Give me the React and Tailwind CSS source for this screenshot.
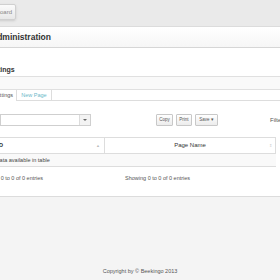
export default function App() {
  const f = { fontFamily: '"Liberation Sans", Arial, sans-serif' };
  return (
    <div className="w-[280px] h-[280px] overflow-hidden bg-[#f4f4f4] text-[#333]" style={f}>
      <div className="h-[27px] bg-[#eaeaea] flex items-start pt-[4px] border-b border-[#dcdcdc]">
        <div className="ml-[-30px] shrink-0 w-[46px] h-[16px] flex items-center justify-end pr-[3px] text-[6px] text-[#888] bg-gradient-to-b from-[#fbfbfb] to-[#e8e8e8] border border-[#d0d0d0] rounded-[2px] shadow-sm">
          Dashboard
        </div>
      </div>
      <div className="h-[21px] bg-gradient-to-b from-[#ffffff] to-[#f6f6f6] border-b border-[#d6d6d6] flex items-center">
        <div className="ml-[-9px] text-[8.5px] font-bold text-[#333]">Administration</div>
      </div>
      <div className="bg-white border-b border-[#dcdcdc] h-[149px] relative">
        <div className="h-[28px] flex items-end pb-[1px]">
          <div className="ml-[-13px] text-[7px] font-bold text-[#333]">Settings</div>
        </div>
        <div className="h-[14px] bg-[#f9f9f9] border-y border-[#e0e0e0]"></div>
        <div className="h-[11px] flex border-b border-[#dddddd]">
          <div className="ml-[-13px] shrink-0 w-[30px] h-[11px] bg-white flex items-center justify-end pr-[3px] text-[5.5px] text-[#555] border-r border-[#dddddd]">Settings</div>
          <div className="w-[35px] shrink-0 h-[11px] flex items-center justify-center text-[5.5px] text-[#6bb9c9] border-r border-[#dddddd]">New Page</div>
        </div>
        <div className="h-[13px]"></div>
        <div className="flex items-center h-[12px]">
          <div className="w-[91px] shrink-0 h-[12px] border border-[#cfcfcf] bg-white flex justify-end">
            <div className="w-[11px] h-full border-l border-[#dcdcdc] bg-[#f3f3f3] flex items-center justify-center">
              <div className="w-0 h-0 border-l-[2px] border-r-[2px] border-t-[2.5px] border-l-transparent border-r-transparent border-t-[#666]"></div>
            </div>
          </div>
          <div className="ml-[65px] shrink-0 flex gap-[3px]">
            <div className="w-[17px] shrink-0 h-[12px] border border-[#c8c8c8] rounded-[1px] bg-gradient-to-b from-white to-[#ececec] flex items-center justify-center text-[4.5px] text-[#555]">Copy</div>
            <div className="w-[16px] shrink-0 h-[12px] border border-[#c8c8c8] rounded-[1px] bg-gradient-to-b from-white to-[#ececec] flex items-center justify-center text-[4.5px] text-[#555]">Print</div>
            <div className="w-[23px] shrink-0 h-[12px] border border-[#c8c8c8] rounded-[1px] bg-gradient-to-b from-white to-[#ececec] flex items-center justify-center text-[4.5px] text-[#555]">Save ▾</div>
          </div>
          <div className="ml-[52px] shrink-0 text-[6px] text-[#555]">Filter</div>
        </div>
        <div className="h-[11px]"></div>
        <div className="w-[276px]">
          <div className="flex h-[17px] border-y border-[#dddddd] bg-white">
            <div className="w-[105px] shrink-0 flex items-center justify-between border-r border-[#dddddd] text-[6px] font-bold text-[#333]">
              <span className="ml-[-3px]">ID</span>
              <span className="mr-[4px] text-[4px] text-[#bbb]">▲</span>
            </div>
            <div className="flex-1 flex items-center relative border-r border-[#dddddd] text-[6px] text-[#333]">
              <span className="w-full text-center">Page Name</span>
              <span className="absolute right-[3px] text-[4px] text-[#ccc]">⇕</span>
            </div>
          </div>
          <div className="h-[13px] bg-[#f9f9f9] border-b border-[#dddddd] flex items-center text-[5.5px] text-[#444]">
            <span className="ml-[-12px]">No data available in table</span>
          </div>
        </div>
        <div className="flex h-[22px] items-center text-[5.5px] text-[#555]">
          <span className="ml-[-22px] shrink-0 w-[147px]">Showing 0 to 0 of 0 entries</span>
          <span className="shrink-0">Showing 0 to 0 of 0 entries</span>
        </div>
      </div>
      <div className="h-[83px] flex items-end justify-center text-[5.5px] text-[#555] pb-[5px]">
        Copyright by © Beekingo 2013
      </div>
    </div>
  );
}
